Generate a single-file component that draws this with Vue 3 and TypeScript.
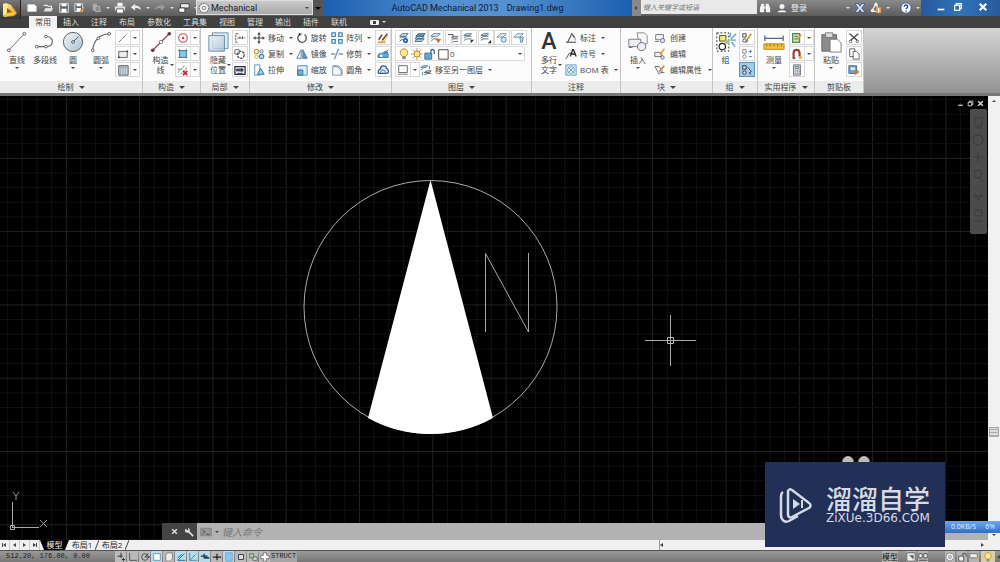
<script setup lang="ts">
import { ref } from 'vue'

interface Tool { label: string; icon: string; menu?: boolean }
interface SmallTool { icon: string; menu?: boolean; active?: boolean }

const tabs: string[] = ['常用', '插入', '注释', '布局', '参数化', '工具集', '视图', '管理', '输出', '插件', '联机']
const activeTab = ref('常用')
const layer = ref('0')
const workspace = ref('Mechanical')
const search = ref('')
const command = ref('')

const quick: { icon: string; menu?: boolean }[] = [
  { icon: 'new' }, { icon: 'open' }, { icon: 'save' }, { icon: 'saveas' }, { icon: 'copydoc', menu: true },
  { icon: 'print' }, { icon: 'undo', menu: true }, { icon: 'redo', menu: true }, { icon: 'sheets', menu: true },
]

const drawBig: Tool[] = [
  { label: '直线', icon: 'line', menu: true }, { label: '多段线', icon: 'pline' },
  { label: '圆', icon: 'circle', menu: true }, { label: '圆弧', icon: 'arc', menu: true },
]
const drawSmall: SmallTool[] = [{ icon: 's-line', menu: true }, { icon: 's-rect', menu: true }, { icon: 's-hatch', menu: true }]
const consSmall: SmallTool[] = [{ icon: 's-center', menu: true }, { icon: 's-crect', menu: true }, { icon: 's-cdel', menu: true }]
const localSmall: SmallTool[] = [{ icon: 's-break' }, { icon: 's-rot' }, { icon: 's-frame' }]
const modify: Tool[][] = [
  [{ label: '移动', icon: 'move', menu: true }, { label: '复制', icon: 'copy', menu: true }, { label: '拉伸', icon: 'stretch' }],
  [{ label: '旋转', icon: 'rotate' }, { label: '镜像', icon: 'mirror' }, { label: '缩放', icon: 'scale' }],
  [{ label: '阵列', icon: 'array', menu: true }, { label: '修剪', icon: 'trim', menu: true }, { label: '圆角', icon: 'fillet', menu: true }],
]
const modSmall: SmallTool[] = [{ icon: 's-brush' }, { icon: 's-edit' }, { icon: 's-cloud' }]
const layerTools: string[][] = [['lay-set', 'lay-iso'], ['lay-match', 'lay-prev'], ['lay-a', 'lay-b'], ['lay-c', 'lay-d']]
const notes: Tool[] = [{ label: '标注', icon: 'dim', menu: true }, { label: '符号', icon: 'symbol', menu: true }, { label: 'BOM 表', icon: 'bom', menu: true }]
const blocks: Tool[] = [{ label: '创建', icon: 'bcreate' }, { label: '编辑', icon: 'bedit' }, { label: '编辑属性', icon: 'battr', menu: true }]
const groupSmall: SmallTool[] = [{ icon: 's-gedit' }, { icon: 's-gplus' }, { icon: 's-gsel', active: true }]
const utilSmall: SmallTool[] = [{ icon: 's-select', menu: true }, { icon: 's-magnet', menu: true }, { icon: 's-calc' }]
const clipSmall: SmallTool[] = [{ icon: 's-cut' }, { icon: 's-copy' }, { icon: 's-match' }]

const toggles: { icon: string; on?: boolean }[] = [
  { icon: 't-infer' }, { icon: 't-ortho' }, { icon: 't-polar' }, { icon: 't-snap', on: true }, { icon: 't-3d' },
  { icon: 't-angle', on: true }, { icon: 't-ucs', on: true }, { icon: 't-dyn', on: true }, { icon: 't-lwt' },
  { icon: 't-trans', on: true }, { icon: 't-qp' }, { icon: 't-sel' }, { icon: 't-plus' },
]

const grid = Array.from({ length: 150 }, (_, i) => ({ p: i * 14.66, major: i % 5 === 0 }))
</script>

<template>
  <div class="app">
    <svg class="defs" aria-hidden="true">
      <defs>
        <linearGradient id="gBlue" x1="0" y1="0" x2="1" y2="1"><stop offset="0" stop-color="#f2f7fb" /><stop offset="1" stop-color="#a9bfd2" /></linearGradient>
        <linearGradient id="gGold" x1="0" y1="0" x2="1" y2="1"><stop offset="0" stop-color="#fff0a0" /><stop offset="1" stop-color="#e08a10" /></linearGradient>
      </defs>
      <symbol id="logo" viewBox="0 0 20 18"><path d="M3 3 6 2l4 2-2 9-5 2z" fill="#ffe98a" /><path d="M8 3l3 1 6 8-3 3-11 1 5-5z" fill="url(#gGold)" /><path d="M7 7v5l5-1z" fill="#8a5a08" /><path d="M5 13l10-2 1 2-12 3z" fill="#f9c93a" /></symbol>
      <symbol id="new" viewBox="0 0 14 14"><path d="M2 3h8l2 2v6H2z" fill="#fff" stroke="#ccc" /></symbol>
      <symbol id="open" viewBox="0 0 14 14"><path d="M2 4h4l1 1h4v2" fill="none" stroke="#eee" stroke-width="1.3" /><path d="M2 11 4 7h9l-2 4z" fill="#ddd" /></symbol>
      <symbol id="save" viewBox="0 0 14 14"><path d="M2 2h10v10H2z" fill="#5d6672" stroke="#eee" /><path d="M4 2h6v3H4zM4 8h6v4H4z" fill="#fff" /></symbol>
      <symbol id="saveas" viewBox="0 0 14 14"><path d="M1 2h9v9H1z" fill="#5d6672" stroke="#eee" /><path d="M3 2h5v3H3zM3 7h5v4H3z" fill="#fff" /><path d="M7 12 12 6" stroke="#d88a3a" stroke-width="2" /></symbol>
      <symbol id="copydoc" viewBox="0 0 14 14"><path d="M3 2h5v8H3z" fill="#a8a8a8" /><path d="M6 5h5l1 6H6z" fill="#8c8c8c" stroke="#bbb" /></symbol>
      <symbol id="print" viewBox="0 0 14 14"><path d="M4 1h6v4H4z" fill="#fff" /><path d="M1 5h12v5H1z" fill="#ddd" /><path d="M3 8h8v5H3z" fill="#fff" stroke="#555" /></symbol>
      <symbol id="undo" viewBox="0 0 14 14"><path d="M1 6l5-4v2.500c4 0 6 1 7 5-2-2-4-2.500-7-2.500v3z" fill="#eee" /></symbol>
      <symbol id="redo" viewBox="0 0 14 14"><path d="M13 6 8 2v2.500c-4 0-6 1-7 5 2-2 4-2.500 7-2.500v3z" fill="#9a9a9a" /></symbol>
      <symbol id="sheets" viewBox="0 0 14 14"><path d="M3 2h10v5H3z" fill="#eee" stroke="#333" /><path d="M1 7h7v5H1z" fill="#fff" stroke="#333" /></symbol>
      <symbol id="gear" viewBox="0 0 14 14"><circle cx="7" cy="7" r="5.500" fill="#eee" stroke="#777" stroke-dasharray="2 1" stroke-width="1.5" /><circle cx="7" cy="7" r="2" fill="none" stroke="#777" /></symbol>
      <symbol id="binoc" viewBox="0 0 14 14"><path d="M3 2h3v10H1V7zM8 2h3l2 5v5H8z" fill="#f2f2f2" /><path d="M6 5h2v3H6z" fill="#ddd" /></symbol>
      <symbol id="user" viewBox="0 0 14 14"><circle cx="7" cy="5" r="3.500" fill="#f2f2f2" /><path d="M1 13c0-4 12-4 12 0z" fill="#f2f2f2" /></symbol>
      <symbol id="exch" viewBox="0 0 14 14"><path d="M1 2h4l2 3 2-3h4l-4 5 4 5H9L7 9l-2 3H1l4-5z" fill="#dfe6f2" stroke="#38559a" /></symbol>
      <symbol id="a360" viewBox="0 0 14 14"><path d="M7 2 2 11h9z" fill="none" stroke="#eee" stroke-width="1.500" /><circle cx="7" cy="3" r="2" fill="#eee" /><circle cx="3" cy="10" r="2" fill="#eee" /><path d="M7 6h6v7H7z" fill="#e8944c" /><path d="M10 7v5" stroke="#fff" stroke-width="1.500" /></symbol>
      <symbol id="help" viewBox="0 0 14 14"><circle cx="7" cy="7" r="6" fill="#fff" stroke="#3c5f9c" /><path d="M5 5.500c0-3 4.500-2.500 4 0C8.800 7 7 7 7 8.500M7 10v1.500" fill="none" stroke="#24478c" stroke-width="1.6" /></symbol>

      <symbol id="line" viewBox="0 0 24 24"><path d="M3 21 20 3" stroke="#666" /><circle cx="3" cy="21" r="1.500" fill="#fff" stroke="#555" /><circle cx="20" cy="3" r="1.500" fill="#fff" stroke="#555" /></symbol>
      <symbol id="pline" viewBox="0 0 24 24"><path d="M3 17h11c8 0 8-11 0-11h-2" fill="none" stroke="#666" stroke-width="1.3" /><circle cx="3" cy="17" r="1.500" fill="#fff" stroke="#555" /><circle cx="13" cy="17" r="1.500" fill="#fff" stroke="#555" /><circle cx="13" cy="6" r="1.500" fill="#fff" stroke="#555" /></symbol>
      <symbol id="circle" viewBox="0 0 24 24"><circle cx="12" cy="12" r="10.500" fill="url(#gBlue)" stroke="#555" /><path d="m12 12 6-6" stroke="#555" /><circle cx="12" cy="12" r="1.500" fill="#fff" stroke="#555" /></symbol>
      <symbol id="arc" viewBox="0 0 24 24"><path d="M3 21C4 10 10 4 21 3" fill="none" stroke="#666" stroke-width="1.3" /><circle cx="3" cy="21" r="1.500" fill="#fff" stroke="#555" /><circle cx="9" cy="8" r="1.500" fill="#fff" stroke="#555" /><circle cx="21" cy="3" r="1.500" fill="#fff" stroke="#555" /></symbol>
      <symbol id="xline" viewBox="0 0 24 24"><path d="M3 21 21 3" stroke="#a04050" stroke-width="1.3" /><circle cx="3" cy="21" r="2" fill="#5a3a40" /><circle cx="21" cy="3" r="2" fill="#5a3a40" /><circle cx="12" cy="12" r="1.800" fill="#fff" stroke="#777" /></symbol>
      <symbol id="hide" viewBox="0 0 24 24"><path d="M6 2h17v17H6z" fill="#dcecf8" stroke="#6f8aa3" /><path d="M2 5h17v17H2z" fill="url(#gBlue)" fill-opacity=".8" stroke="#6688a6" /></symbol>
      <symbol id="insert" viewBox="0 0 24 24"><path d="M11 2h8l3 3v9h-9z" fill="#f7f7f7" stroke="#888" /><path d="M2 9h13v8H2z" fill="#eef0f4" stroke="#778" /><circle cx="16" cy="17" r="4.500" fill="#eef0f4" stroke="#667" /><path d="M2 18h4" stroke="#667" /></symbol>
      <symbol id="group" viewBox="0 0 24 24"><path d="M2 2h13v20H2z" fill="none" stroke="#222" stroke-dasharray="2 2" /><path d="M5 5h7v6H5z" fill="#f4f06a" stroke="#444" /><path d="M11 10h5v4h-5z" fill="#9bd07e" /><circle cx="8" cy="17" r="3.500" fill="#fff" stroke="#222" stroke-width="1.3" /><path d="m17 9 6-6M17 10h6M16 7l1-5M18 12l4 5" stroke="#5aa6e0" stroke-width="1.500" /></symbol>
      <symbol id="measure" viewBox="0 0 24 24"><path d="M2 5v6M22 5v6M2 8h20" stroke="#53678a" stroke-width="1.4" /><path d="M1 14h22v6H1z" fill="#f4c13c" stroke="#b98716" /><path d="M4 14v3M8 14v3M12 14v3M16 14v3M20 14v3" stroke="#9b6c0c" /></symbol>
      <symbol id="paste" viewBox="0 0 24 24"><path d="M2 4h16v18H2z" fill="#8b8b8b" stroke="#666" /><path d="M6 2h8v5H6z" fill="#ddd" stroke="#777" /><path d="M11 9h8l4 4v10H11z" fill="#fff" stroke="#777" /></symbol>

      <symbol id="s-line" viewBox="0 0 14 14"><path d="m2 12 10-10" stroke="#555" stroke-dasharray="5 1.500" /></symbol>
      <symbol id="s-rect" viewBox="0 0 14 14"><path d="M2 4h10v7H2z" fill="#eee" stroke="#555" /><path d="M1 10h2v2H1zM11 3h2v2h-2z" fill="#444" /></symbol>
      <symbol id="s-hatch" viewBox="0 0 14 14"><path d="M2 2h11v11H2z" fill="#cfd8e2" stroke="#444" /><path d="M4 3v9M6 3v9M8 3v9M10 3v9M2 4h11" stroke="#8593a3" stroke-width=".7" /></symbol>
      <symbol id="s-center" viewBox="0 0 14 14"><circle cx="7" cy="7" r="5" fill="none" stroke="#c4494f" stroke-width="1.3" /><circle cx="7" cy="7" r="1.500" fill="#c4494f" /></symbol>
      <symbol id="s-crect" viewBox="0 0 14 14"><path d="M3 3h8v8H3z" fill="#8fc3e8" stroke="#3d88bd" /><path d="M1 3h12M1 11h12M3 1v12M11 1v12" stroke="#4a6f8e" stroke-dasharray="2 1" /></symbol>
      <symbol id="s-cdel" viewBox="0 0 14 14"><path d="M1 10 9 2M4 12l8-8M1 6h5" stroke="#555" stroke-dasharray="3 1" /><path d="m7 8 5 5M12 8l-5 5" stroke="#c4272c" stroke-width="2" /></symbol>
      <symbol id="s-break" viewBox="0 0 14 14"><path d="M5 2H2v10h3M4 7h9M7 5v4M10 5v4" fill="none" stroke="#444" stroke-dasharray="3 1" /></symbol>
      <symbol id="s-rot" viewBox="0 0 14 14"><circle cx="8" cy="8" r="4" fill="none" stroke="#444" stroke-width="1.5" stroke-dasharray="3 1" /><path d="M1 2h5v5H1z" fill="none" stroke="#555" /></symbol>
      <symbol id="s-frame" viewBox="0 0 14 14"><path d="M1 3h12v9H1z" fill="#e6e8ef" stroke="#334" stroke-width="1.500" /><path d="M3 6h6V5l2 2-2 2V8H3zM4 11h6" fill="#334" stroke="#334" /></symbol>
      <symbol id="move" viewBox="0 0 14 14"><path d="M7 2v10M2 7h10" stroke="#444" stroke-width="1.3" /><path d="m7 0 2 3H5zM7 14l2-3H5zM0 7l3-2v4zM14 7l-3-2v4z" fill="#444" /></symbol>
      <symbol id="copy" viewBox="0 0 14 14"><circle cx="4" cy="4" r="2.500" fill="#fff" stroke="#d69b3a" stroke-width="1.500" /><circle cx="10" cy="4" r="2" fill="#c9e2f4" stroke="#4b8bbb" /><circle cx="4" cy="10" r="2" fill="#fff" stroke="#d69b3a" /><circle cx="10" cy="10" r="2.500" fill="#c9e2f4" stroke="#4b8bbb" stroke-width="1.500" /></symbol>
      <symbol id="stretch" viewBox="0 0 14 14"><path d="M2 1h6v12H2z" fill="#fff" stroke="#5b87ab" /><path d="M5 12 9 5l4 7z" fill="#9fcbe9" stroke="#2c6795" /></symbol>
      <symbol id="rotate" viewBox="0 0 14 14"><path d="M5 2.500a5 5 0 1 0 5 .5" fill="none" stroke="#555" stroke-width="1.500" /><path d="m3 1 4 1-3 3z" fill="#444" /></symbol>
      <symbol id="mirror" viewBox="0 0 14 14"><path d="M6 2v10H1z" fill="#fff" stroke="#456f90" /><path d="M8 2v10h5z" fill="#5da0cf" stroke="#456f90" /></symbol>
      <symbol id="scale" viewBox="0 0 14 14"><path d="M2 2h11v11H2z" fill="#d9eefb" stroke="#4682ad" /><path d="M2 7h6v6H2z" fill="#6fb2dc" stroke="#2f6c98" /></symbol>
      <symbol id="array" viewBox="0 0 14 14"><path d="M1 1h4v4H1zM9 1h4v4H9zM1 9h4v4H1zM9 9h4v4H9z" fill="#fff" stroke="#3f87b8" stroke-width="1.500" /></symbol>
      <symbol id="trim" viewBox="0 0 14 14"><path d="M0 7h5M9 7h5" stroke="#444" /><path d="M4 13 9 1" stroke="#6699c0" stroke-width="1.500" /></symbol>
      <symbol id="fillet" viewBox="0 0 14 14"><path d="M2 2h4c4 0 7 3 7 7v4H2z" fill="#f4f7fa" stroke="#7c8a99" /><path d="M3 3h3c3 0 6 3 6 6v3" fill="none" stroke="#4c81aa" /></symbol>
      <symbol id="s-brush" viewBox="0 0 14 14"><path d="m2 9 4-6M6 10l6-8" stroke="#6b4a20" stroke-width="1.800" /><path d="M1 12h9" stroke="#d69b3a" stroke-width="2" /><path d="m8 11 5-7" stroke="#e0a868" /></symbol>
      <symbol id="s-edit" viewBox="0 0 14 14"><path d="M1 11c0-5 3-6 5-4 1-4 7-4 7 0v4z" fill="#5fa9da" stroke="#33769f" /><circle cx="5" cy="9" r="1.500" fill="#fff" /><path d="m9 7 4-5" stroke="#345" /></symbol>
      <symbol id="s-cloud" viewBox="0 0 14 14"><path d="M2 11c-2-3 1-5 2-5 0-5 7-5 7-1 3 1 3 5 1 6z" fill="#dbe7f2" stroke="#3e5d7c" stroke-width="1.500" /><path d="M4 10c1-4 5-4 6 0" fill="none" stroke="#3e5d7c" /></symbol>

      <symbol id="lay-set" viewBox="0 0 14 14"><path d="M3 5l3-3h7l-3 3zM3 8l2-2h7M3 11l2-2h4" fill="#dfe9f2" stroke="#345a78" /><circle cx="10" cy="10" r="3" fill="#2c66a8" /><circle cx="10" cy="10" r="1" fill="#fff" /></symbol>
      <symbol id="lay-iso" viewBox="0 0 14 14"><path d="M1 8l3-3h8l-3 3zM1 11l3-3h8l-3 3z" fill="#b8d8e8" stroke="#375b72" /><path d="M2 5l3-3h8l-3 3z" fill="#5fa4b8" stroke="#2f5a70" /></symbol>
      <symbol id="lay-match" viewBox="0 0 14 14"><path d="M1 5l3-3h8l-3 3zM1 8l3-3M1 11l3-3h5" fill="#eef3f7" stroke="#54728a" /><path d="M6 8h7l-3 5z" fill="#cf6f31" /></symbol>
      <symbol id="lay-prev" viewBox="0 0 14 14"><path d="M5 7l2-2h6l-2 2zM5 10l2-2h6M5 13l2-2h6" fill="#eef3f7" stroke="#667" /><path d="M1 3h6v3" fill="none" stroke="#333" /></symbol>
      <symbol id="lay-a" viewBox="0 0 14 14"><path d="M1 4l3-2h6L8 4zM1 7l3-2h6M1 10l3-2h6" fill="#e4edf5" stroke="#48667f" /><path d="m13 9-4 4V9z" fill="#233" /></symbol>
      <symbol id="lay-b" viewBox="0 0 14 14"><path d="M1 4l3-2h6L8 4zM1 7l3-2h6M1 10l3-2h6" fill="#e4edf5" stroke="#48667f" /><path d="m9 13 4-4v4z" fill="#233" /></symbol>
      <symbol id="lay-c" viewBox="0 0 14 14"><path d="M1 6l4-4h7L8 6z" fill="#eef4f8" stroke="#68879c" /><circle cx="9" cy="9" r="3" fill="#cfe5f4" stroke="#4d83a8" /></symbol>
      <symbol id="lay-d" viewBox="0 0 14 14"><path d="M1 6l4-4h7L8 6z" fill="#eef4f8" stroke="#68879c" /><path d="M8 6h4l-1 6H9z" fill="#bcd8eb" stroke="#4d83a8" /></symbol>
      <symbol id="bulb" viewBox="0 0 14 14"><path d="M5 10C0 5 4 1 7 1s7 4 2 9z" fill="#ffe98f" stroke="#a58522" /><path d="M5 10h4v3H5z" fill="#888" /></symbol>
      <symbol id="sun" viewBox="0 0 14 14"><path d="M7 0v14M0 7h14M2 2l10 10M12 2 2 12" stroke="#bb8a2e" /><circle cx="7" cy="7" r="3.500" fill="#ffe48a" stroke="#a58522" /></symbol>
      <symbol id="lock" viewBox="0 0 14 14"><path d="M8 6V4c0-3 4-3 4 0v3" fill="none" stroke="#3f6f94" stroke-width="1.500" /><path d="M1 6h8v7H1z" fill="#69a8cf" stroke="#2d648c" /></symbol>
      <symbol id="sq" viewBox="0 0 14 14"><path d="M2 2h11v11H2z" fill="#fff" stroke="#333" /></symbol>
      <symbol id="tray" viewBox="0 0 14 14"><path d="M2 2h10v8H2z" fill="#fff" stroke="#555" /><path d="M1 12h12" stroke="#777" /></symbol>
      <symbol id="laymove" viewBox="0 0 14 14"><path d="M1 4l3-2h5L7 4zM1 7l3-2" fill="#bcdcf0" stroke="#41799f" /><path d="M5 10l3-2h5l-2 2zM5 13l3-2h5" fill="#bcdcf0" stroke="#555" /><path d="M11 2v4M3 9v4" stroke="#41799f" /></symbol>

      <symbol id="dim" viewBox="0 0 14 14"><path d="M1 12h12M3 12 8 2l3 5" fill="none" stroke="#444" stroke-width="1.200" /><path d="M8 2c3 2 4 5 4 8" fill="none" stroke="#777" /></symbol>
      <symbol id="symbol" viewBox="0 0 14 14"><path d="M1 13 5 6h2" fill="none" stroke="#444" /><path d="m6 10 3-8h1l3 8M7 7h5" fill="none" stroke="#222" stroke-width="1.500" /></symbol>
      <symbol id="bom" viewBox="0 0 14 14"><path d="M1 1h12v12H1z" fill="#e1effa" stroke="#5593c0" /><circle cx="7" cy="7" r="4" fill="#fff" stroke="#5593c0" /><path d="m3 3 8 8M11 3l-8 8" stroke="#5593c0" /></symbol>
      <symbol id="bcreate" viewBox="0 0 14 14"><path d="M2 3h9v6H2z" fill="#f4f4f8" stroke="#667" /><circle cx="10" cy="10" r="2.500" fill="#dde" stroke="#667" /><path d="M1 11h5" stroke="#667" /></symbol>
      <symbol id="bedit" viewBox="0 0 14 14"><path d="M1 5h8v5H1z" fill="#f4f4f8" stroke="#667" /><path d="m7 8 5-7" stroke="#e2a832" stroke-width="2" /><circle cx="10" cy="11" r="2" fill="#dde" stroke="#667" /></symbol>
      <symbol id="battr" viewBox="0 0 14 14"><path d="M1 3h5l4 5-4 4z" fill="#f4f4f8" stroke="#667" /><path d="m6 9 6-7" stroke="#c08a2a" stroke-width="2" /><path d="M8 10h4" stroke="#555" /></symbol>
      <symbol id="s-gedit" viewBox="0 0 14 14"><path d="M2 2h4v4H2z" fill="#fff" stroke="#333" /><circle cx="4" cy="10" r="2" fill="#fff" stroke="#333" /><path d="m7 9 5-7" stroke="#c99a28" stroke-width="2" /><path d="m6 12 2-3" stroke="#4b7a35" stroke-width="1.500" /></symbol>
      <symbol id="s-gplus" viewBox="0 0 14 14"><path d="M2 2h4v4H2z" fill="#fff" stroke="#777" /><circle cx="4" cy="10" r="2" fill="#fff" stroke="#777" /><path d="M9 4h4M11 2v4M9 10h4" stroke="#49769b" /></symbol>
      <symbol id="s-gsel" viewBox="0 0 14 14"><path d="M2 2h4v4H2z" fill="#d2e9f8" stroke="#223" /><circle cx="4" cy="10" r="2" fill="#d2e9f8" stroke="#223" /><path d="m8 4 4 5-2 .5 1 3" fill="#fff" stroke="#223" /></symbol>
      <symbol id="s-select" viewBox="0 0 14 14"><path d="M2 2h8v10H2z" fill="#cfe7b8" stroke="#4b8b45" stroke-width="1.500" /><path d="m7 9 5-6" stroke="#d9a437" stroke-width="2" /><path d="M4 5h4M4 8h3" stroke="#447" /></symbol>
      <symbol id="s-magnet" viewBox="0 0 14 14"><path d="M3 12V6c0-5 7-5 7 0v4" fill="none" stroke="#a33a3a" stroke-width="2.500" /><path d="M2 11h3v2H2z" fill="#555" /><circle cx="11" cy="11" r="2" fill="#e8b23a" /></symbol>
      <symbol id="s-calc" viewBox="0 0 14 14"><path d="M3 1h8v12H3z" fill="#d6dbe2" stroke="#5b6673" /><path d="M5 3h4v2H5z" fill="#fff" stroke="#667" /><path d="M5 7h5M5 9h5M5 11h5" stroke="#667" stroke-dasharray="1 1" /></symbol>
      <symbol id="s-cut" viewBox="0 0 14 14"><path d="m2 2 9 8M12 2 3 10" stroke="#444" stroke-width="1.500" /><circle cx="3" cy="11" r="1.500" fill="none" stroke="#555" /><circle cx="11" cy="11" r="1.500" fill="none" stroke="#555" /></symbol>
      <symbol id="s-copy" viewBox="0 0 14 14"><path d="M2 1h6v9H2z" fill="#fff" stroke="#555" /><path d="M6 4h4l3 3v6H6z" fill="#fff" stroke="#555" /></symbol>
      <symbol id="s-match" viewBox="0 0 14 14"><path d="M1 2h9v9H1z" fill="#6ba4cf" stroke="#3a6287" /><path d="M3 4h5v3H3z" fill="#e8f2fa" /><path d="m7 9 5-2 1 3-5 3z" fill="#d07a2e" /></symbol>

      <symbol id="t-infer" viewBox="0 0 12 12"><path d="M6 1v6M2 5h6M7 9h4M9 7v4" stroke="#333" stroke-width="1.200" /></symbol>
      <symbol id="t-ortho" viewBox="0 0 12 12"><path d="M2 1v9h9" fill="none" stroke="#444" /></symbol>
      <symbol id="t-polar" viewBox="0 0 12 12"><circle cx="6" cy="6" r="4" fill="none" stroke="#444" /><path d="M6 6h6M6 6l4-4" stroke="#333" /></symbol>
      <symbol id="t-snap" viewBox="0 0 12 12"><path d="M2 2h8v8H2z" fill="#fff" stroke="#6b8796" /></symbol>
      <symbol id="t-3d" viewBox="0 0 12 12"><path d="M2 4l2-3h6v7l-2 3H2z" fill="#eee" stroke="#777" /></symbol>
      <symbol id="t-angle" viewBox="0 0 12 12"><path d="M10 2 2 10h9M2 7l5-4" fill="none" stroke="#33708e" stroke-width="1.200" /></symbol>
      <symbol id="t-ucs" viewBox="0 0 12 12"><path d="M2 1v9h9M2 10l7-7" fill="none" stroke="#51788c" /></symbol>
      <symbol id="t-dyn" viewBox="0 0 12 12"><path d="M5 2v6M1 5h8" stroke="#234" stroke-width="1.500" /><path d="M6 6h5v2H6z" fill="#234" /></symbol>
      <symbol id="t-lwt" viewBox="0 0 12 12"><path d="M1 6h10M6 2v8" stroke="#222" stroke-width="1.500" /></symbol>
      <symbol id="t-trans" viewBox="0 0 12 12"><path d="M2 1h8v10H2z" fill="#8fc5ea" stroke="#71a6c9" /></symbol>
      <symbol id="t-qp" viewBox="0 0 12 12"><path d="M3 3h6v6H3z" fill="#ddd" stroke="#444" stroke-width="1.200" /></symbol>
      <symbol id="t-sel" viewBox="0 0 12 12"><path d="M2 2h5v5H2z" fill="none" stroke="#4a7a4a" /><path d="M6 6h5v4H6z" fill="#cfe3c7" stroke="#3e6b3e" /></symbol>
      <symbol id="t-plus" viewBox="0 0 12 12"><path d="M4 1h4v3h3v4H8v3H4V8H1V4h3z" fill="#fff" stroke="#666" /></symbol>
      <symbol id="r-qv" viewBox="0 0 12 12"><path d="M1 1h10v10H1z" fill="#eee" stroke="#555" /><path d="M4 4l5 5V4z" fill="#555" /></symbol>
      <symbol id="r-lay" viewBox="0 0 12 12"><path d="M1 2h4v5H1zM7 2h4v5H7zM1 10h10" fill="#eee" stroke="#444" /></symbol>
      <symbol id="r-lock" viewBox="0 0 12 12"><path d="M7 5V3c0-2 4-2 4 0v2" fill="none" stroke="#555" stroke-width="1.300" /><path d="M2 5h6v6H2z" fill="#eee" stroke="#444" /></symbol>
      <symbol id="r-anno" viewBox="0 0 12 12"><path d="M1 2h9v5H1z" fill="#eee" stroke="#666" /><path d="M6 6h5v4z" fill="#d9a437" /></symbol>
      <symbol id="winmin" viewBox="0 0 12 12"><path d="M2 8h8v2H2z" fill="currentColor" /></symbol>
      <symbol id="winres" viewBox="0 0 12 12"><path d="M4 4V2h6v6H8M2 4h6v6H2z" fill="none" stroke="currentColor" stroke-width="1.500" /></symbol>
      <symbol id="winx" viewBox="0 0 12 12"><path d="m2 2 8 8M10 2l-8 8" stroke="currentColor" stroke-width="2.500" /></symbol>
      <symbol id="wrench" viewBox="0 0 12 12"><path d="m5 5 6 6" stroke="#ddd" stroke-width="2" /><path d="M1 4a3 3 0 0 0 6 0 3 3 0 0 0-2-3v3H4L2 2z" fill="#ddd" /></symbol>
      <symbol id="prompt" viewBox="0 0 16 12"><path d="M1 1h14v10H1z" fill="#999" stroke="#777" /><path d="m3 3 4 3-4 3M8 9h5" fill="none" stroke="#555" stroke-width="1.300" /></symbol>
    </svg>

    <header class="titlebar">
      <button class="appbtn" aria-label="应用程序菜单"><svg><use href="#logo" /></svg></button>
      <nav class="quick">
        <template v-for="q in quick" :key="q.icon">
          <button :aria-label="q.icon"><svg class="i12"><use :href="'#' + q.icon" /></svg></button>
          <i v-if="q.menu" class="tri pale" />
        </template>
      </nav>
      <div class="workspace">
        <svg class="i12"><use href="#gear" /></svg>
        <select v-model="workspace" aria-label="工作空间"><option>Mechanical</option></select>
        <i class="tri" />
      </div>
      <button class="wsmore" aria-label="自定义"><i class="tri" /></button>
      <h1><span>AutoCAD Mechanical 2013</span><span>Drawing1.dwg</span></h1>
      <button class="expand" aria-label="展开"><i class="play" /></button>
      <input v-model="search" class="search" aria-label="搜索" placeholder="键入关键字或短语">
      <div class="info">
        <button aria-label="搜索帮助"><svg class="i12"><use href="#binoc" /></svg></button>
        <button class="login"><svg class="i10"><use href="#user" /></svg>登录</button>
      </div>
      <div class="info right">
        <i class="tri pale" />
        <button aria-label="Exchange"><svg class="i12"><use href="#exch" /></svg></button>
        <button aria-label="A360"><svg class="i12"><use href="#a360" /></svg></button>
        <i class="tri pale" />
        <button class="helpbtn" aria-label="帮助"><svg class="i12"><use href="#help" /></svg></button>
        <i class="tri pale" />
      </div>
      <div class="winbtns">
        <button aria-label="最小化"><svg class="i10"><use href="#winmin" /></svg></button>
        <button aria-label="还原"><svg class="i10"><use href="#winres" /></svg></button>
        <button class="close" aria-label="关闭"><svg class="i10"><use href="#winx" /></svg></button>
      </div>
    </header>

    <nav class="tabs">
      <button v-for="t in tabs" :key="t" :class="{ active: t === activeTab }" @click="activeTab = t">{{ t }}</button>
      <button class="cam" aria-label="最小化功能区"><b /><i class="tri pale" /></button>
    </nav>

    <main class="ribbon">
      <section class="panel p-draw">
        <div class="body">
          <button v-for="b in drawBig" :key="b.label" class="big"><svg><use :href="'#' + b.icon" /></svg><span>{{ b.label }}</span><i v-if="b.menu" class="tri" /></button>
          <div class="smalls"><button v-for="s in drawSmall" :key="s.icon" class="small" :aria-label="s.icon"><svg class="i12"><use :href="'#' + s.icon" /></svg><em v-if="s.menu"><i class="tri" /></em></button></div>
        </div>
        <h2>绘制<i class="tri wide" /></h2>
      </section>

      <section class="panel p-cons">
        <div class="body">
          <button class="big"><svg><use href="#xline" /></svg><span>构造<br>线</span><i class="tri side" /></button>
          <div class="smalls"><button v-for="s in consSmall" :key="s.icon" class="small" :aria-label="s.icon"><svg class="i12"><use :href="'#' + s.icon" /></svg><em v-if="s.menu"><i class="tri" /></em></button></div>
        </div>
        <h2>构造<i class="tri wide" /></h2>
      </section>

      <section class="panel p-local">
        <div class="body">
          <button class="big"><svg><use href="#hide" /></svg><span>隐藏<br>位置</span><i class="tri side" /></button>
          <div class="smalls"><button v-for="s in localSmall" :key="s.icon" class="small" :aria-label="s.icon"><svg class="i12"><use :href="'#' + s.icon" /></svg></button></div>
        </div>
        <h2>局部<i class="tri wide" /></h2>
      </section>

      <section class="panel p-mod">
        <div class="body">
          <div v-for="(col, i) in modify" :key="i" class="col">
            <button v-for="m in col" :key="m.label" class="row"><svg class="i12"><use :href="'#' + m.icon" /></svg>{{ m.label }}<i v-if="m.menu" class="tri" /></button>
          </div>
          <div class="smalls"><button v-for="s in modSmall" :key="s.icon" class="small" :aria-label="s.icon"><svg class="i12"><use :href="'#' + s.icon" /></svg></button></div>
        </div>
        <h2>修改<i class="tri wide" /></h2>
      </section>

      <section class="panel p-layer">
        <div class="body stack">
          <div class="ltools"><div v-for="(g, i) in layerTools" :key="i"><button v-for="l in g" :key="l" class="small" :aria-label="l"><svg class="i12"><use :href="'#' + l" /></svg></button></div></div>
          <div class="combo">
            <svg class="i12"><use href="#bulb" /></svg><svg class="i12"><use href="#sun" /></svg><svg class="i12"><use href="#lock" /></svg><svg class="i12"><use href="#sq" /></svg>
            <select v-model="layer" aria-label="图层"><option>0</option></select><i class="tri" />
          </div>
          <div class="lrow">
            <button class="small" aria-label="图层状态"><svg class="i12"><use href="#tray" /></svg><em><i class="tri" /></em></button>
            <button class="row"><svg class="i12"><use href="#laymove" /></svg>移至另一图层<i class="tri" /></button>
          </div>
        </div>
        <h2>图层<i class="tri wide" /></h2>
      </section>

      <section class="panel p-note">
        <div class="body">
          <button class="big"><b class="letter">A</b><span>多行<br>文字</span><i class="tri side" /></button>
          <div class="col"><button v-for="m in notes" :key="m.label" class="row"><svg class="i12"><use :href="'#' + m.icon" /></svg>{{ m.label }}<i class="tri" /></button></div>
        </div>
        <h2>注释</h2>
      </section>

      <section class="panel p-block">
        <div class="body">
          <button class="big"><svg><use href="#insert" /></svg><span>插入</span><i class="tri" /></button>
          <div class="col"><button v-for="m in blocks" :key="m.label" class="row"><svg class="i12"><use :href="'#' + m.icon" /></svg>{{ m.label }}<i v-if="m.menu" class="tri" /></button></div>
        </div>
        <h2>块<i class="tri wide" /></h2>
      </section>

      <section class="panel p-group">
        <div class="body">
          <button class="big"><svg><use href="#group" /></svg><span>组</span></button>
          <div class="smalls"><button v-for="s in groupSmall" :key="s.icon" class="small" :class="{ on: s.active }" :aria-label="s.icon"><svg class="i12"><use :href="'#' + s.icon" /></svg></button></div>
        </div>
        <h2>组<i class="tri wide" /></h2>
      </section>

      <section class="panel p-util">
        <div class="body">
          <button class="big"><svg><use href="#measure" /></svg><span>测量</span><i class="tri" /></button>
          <div class="smalls"><button v-for="s in utilSmall" :key="s.icon" class="small" :aria-label="s.icon"><svg class="i12"><use :href="'#' + s.icon" /></svg><em v-if="s.menu"><i class="tri" /></em></button></div>
        </div>
        <h2>实用程序<i class="tri wide" /></h2>
      </section>

      <section class="panel p-clip">
        <div class="body">
          <button class="big"><svg><use href="#paste" /></svg><span>粘贴</span><i class="tri" /></button>
          <div class="smalls"><button v-for="s in clipSmall" :key="s.icon" class="small" :aria-label="s.icon"><svg class="i12"><use :href="'#' + s.icon" /></svg></button></div>
        </div>
        <h2>剪贴板</h2>
      </section>
    </main>

    <div class="work">
      <div class="canvas">
        <svg class="drawing">
          <g transform="translate(-7 -11)">
            <line v-for="(g, i) in grid" :key="'v' + i" :x1="g.p" :x2="g.p" y1="0" y2="110%" class="g" :class="{ major: g.major }" />
            <line v-for="(g, i) in grid" :key="'h' + i" x1="0" x2="110%" :y1="g.p" :y2="g.p" class="g" :class="{ major: g.major }" />
          </g>
          <circle cx="430.5" cy="211" r="126.500" fill="none" stroke="#bbb" stroke-width=".9" />
          <path d="M430.500 84 493 322Q464 338 430.500 338T368 322z" fill="#fff" />
          <path d="M485.500 236V157.500L528.500 236V157" fill="none" stroke="#bbb" stroke-width=".9" />
          <path d="M645 244.500h51M670.500 219v51" stroke="#aaa" />
          <path d="M667.500 241.500h6v6h-6z" fill="none" stroke="#bbb" />
          <path d="M12.500 406v26M10.500 429.500h4v4h-4zM12 431.500h27" fill="none" stroke="#aaa" />
          <path d="m13 396 3 4 3-4M16 400v4M40 424l7 7M47 424l-7 7" fill="none" stroke="#999" />
        </svg>
        <div class="docbtns">
          <button aria-label="最小化图形"><svg><use href="#winmin" /></svg></button>
          <button aria-label="还原图形"><svg><use href="#winres" /></svg></button>
          <button aria-label="关闭图形"><svg><use href="#winx" /></svg></button>
        </div>
        <div class="navbar">
          <svg viewBox="0 0 17 125"><g fill="none" stroke="#3a3a3a"><path d="M5 9h7v8H5zM6 19h6" /><circle cx="8" cy="31" r="5" /><path d="M8 43v10M4 48h9" /><circle cx="8" cy="65" r="4" /><path d="m10 69 4 4" /><path d="M4 87h9M5 84l3 7 4-7" /><path d="M5 101h7v6H5zM4 112h9" /></g></svg>
        </div>
        <div class="cmd">
          <div class="cmdgrip"><svg class="i10"><use href="#winx" /></svg><svg class="i10"><use href="#wrench" /></svg></div>
          <svg class="prompt"><use href="#prompt" /></svg><i class="tri" />
          <input v-model="command" aria-label="命令" placeholder="键入命令">
        </div>
      </div>
      <div class="vscroll"><i class="tri up" /><b /><i class="tri" /></div>
      <div class="bumps"><i /><i /></div>
      <a class="brand" href="#">
        <svg viewBox="0 0 36 38"><path d="M9 5v24c0 2 2 3 4 2l17-9c2-1 2-4 0-5L13 4c-2-1-3-1-4 1z" fill="none" stroke="#d6dae4" stroke-width="2.500" /><path d="M4 6c-2 1-2 3-2 5v18c0 5 4 8 8 6l9-5" fill="none" stroke="#d6dae4" stroke-width="2.500" /><path d="m14 13 7 5-7 5z" fill="#d6dae4" /><path d="M23 14v8" stroke="#d6dae4" stroke-width="2" /></svg>
        <span><strong>溜溜自学</strong><small>ZiXUe.3D66.COM</small></span>
      </a>
      <div class="speed"><span>0.0KB/S</span><span>6%</span></div>
    </div>

    <div class="sheets">
      <div class="arrows"><button aria-label="第一个"><i class="play back bar" /></button><button aria-label="上一个"><i class="play back" /></button><button aria-label="下一个"><i class="play" /></button><button aria-label="最后一个"><i class="play bar" /></button></div>
      <button class="sheet cur">模型</button><button class="sheet">布局1</button><svg class="slash" viewBox="0 0 4 10"><path d="M0 10 4 0" stroke="#444" /></svg><button class="sheet">布局2</button><svg class="slash" viewBox="0 0 4 10"><path d="M0 10 4 0" stroke="#444" /></svg>
      <div class="hscroll"><i class="play back" /><i class="play" /></div>
    </div>

    <footer class="status">
      <output>512.20, 176.00, 0.00</output>
      <div class="toggles"><button v-for="t in toggles" :key="t.icon" :class="{ on: t.on }" :aria-label="t.icon"><svg><use :href="'#' + t.icon" /></svg></button></div>
      <button class="struct">STRUCT</button>
      <div class="sright">
        <button class="model">模型</button>
        <button aria-label="快速查看布局"><svg><use href="#r-qv" /></svg></button>
        <button aria-label="快速查看图形"><svg><use href="#r-lay" /></svg></button>
        <button class="gap" aria-label="工作空间"><svg><use href="#gear" /></svg></button>
        <button aria-label="锁定"><svg><use href="#r-lock" /></svg></button>
        <button aria-label="注释"><svg><use href="#r-anno" /></svg></button>
        <button class="iso" aria-label="隔离"><svg><use href="#bulb" /></svg></button>
        <i class="play back" />
      </div>
    </footer>
  </div>
</template>

<style>
html, body { margin: 0; background: #000; }
</style>

<style scoped>
.app { display: flex; flex-direction: column; height: 100vh; min-width: 0; overflow: hidden; font-family: "Open Sans", "Noto Sans CJK SC", sans-serif; font-size: 8px; line-height: 10px; color: #444; background: #3f3f3f; }
.app *, .app *::before { box-sizing: border-box; }
.defs { position: absolute; width: 0; height: 0; }
button { padding: 0; border: 0; background: none; font: inherit; color: inherit; display: flex; align-items: center; justify-content: center; }
select, input { font: inherit; color: inherit; border: 0; background: none; padding: 0; margin: 0; min-width: 0; outline: 0; appearance: none; }
svg { display: block; flex: none; }
.i12 { width: 12px; height: 12px; }
.i10 { width: 10px; height: 10px; }
.tri { width: 0; height: 0; border: 2px solid transparent; border-top-color: #444; border-bottom: 0; flex: none; }
.tri.wide { border-width: 3px; border-bottom: 0; }
.tri.pale { border-top-color: #ddd; }
.tri.up { border-top: 0; border-bottom: 2px solid #444; }
.play { width: 0; height: 0; border: 2px solid transparent; border-left: 3px solid #444; border-right: 0; flex: none; }
.play.back { border-left: 0; border-right: 3px solid #444; }

.titlebar { flex: none; display: flex; height: 16px; background: linear-gradient(#8a8a8a, #5c5c5c); }
.appbtn { width: 21px; height: 19px; background: linear-gradient(#777, #333); border-right: 1px solid #222; position: relative; }
.appbtn svg { width: 20px; height: 18px; }
.quick { display: flex; align-items: center; gap: 4px; width: 175px; padding-left: 5px; }
.workspace { display: flex; align-items: center; gap: 1px; width: 117px; height: 15px; padding: 0 3px 0 1px; background: linear-gradient(#c9c9c9, #aaa); border: 1px solid #ddd; color: #222; font: 9px/12px Roboto, sans-serif; }
.workspace select { flex: 1; }
.wsmore { width: 10px; background: #555; }
.wsmore .tri { border-width: 3px; border-bottom: 0; border-top-color: #000; }
h1 { flex: 1; margin: 0; display: flex; justify-content: center; align-items: center; gap: 8px; font: 400 9px/12px Roboto, sans-serif; color: #0c1c38; background: linear-gradient(90deg, #1b5fb0, #5590d0 40%, #5590d0 60%, #1b5fb0); }
.expand { width: 9px; background: #888; }
.search { width: 116px; height: 14px; padding-left: 2px; font-size: 7px; font-style: italic; background: #e9e9e9; }
.search::placeholder, .cmd input::placeholder { color: #777; opacity: 1; }
.info { display: flex; align-items: center; gap: 6px; padding-left: 2px; width: 87px; color: #eee; }
.login { gap: 4px; }
.info.right { gap: 4px; width: 77px; padding-left: 2px; }
.helpbtn { margin-left: 6px; }
.winbtns { display: flex; gap: 7px; width: 79px; padding: 0 0 2px 15px; background: linear-gradient(90deg, #27599c, #2f73b9 50%, #27599c); color: #fff; }
.winbtns .close { margin-left: 8px; }

.tabs { flex: none; display: flex; height: 12px; padding-left: 29px; color: #ddd; background: #404040; }
.tabs button { padding: 0 6px; }
.tabs .active { color: #444; background: #f2f2f2; }
.tabs .cam { margin-left: 11px; gap: 3px; }
.cam b { width: 9px; height: 5px; border: 1px solid #eee; border-width: 1px 3px; border-radius: 1px; }

.ribbon { flex: none; display: flex; height: 65px; background: linear-gradient(#d4d4d4, #929292); }
.panel { flex: none; display: flex; flex-direction: column; background: #fcfcfc; border-right: 1px solid #c4c4c4; }
.body { flex: 1; display: flex; align-items: flex-start; padding: 2px 0 0 3px; }
.panel h2 { margin: 0; height: 12px; display: flex; align-items: center; justify-content: center; gap: 5px; font-size: 8px; font-weight: 400; background: #ececec; }
.p-draw { width: 143px; }
.p-cons { width: 58px; }
.p-local { width: 49px; }
.p-mod { width: 142px; }
.p-layer { width: 140px; }
.p-note { width: 89px; }
.p-block { width: 92px; }
.p-group { width: 45px; }
.p-util { width: 57px; }
.p-clip { width: 49px; }
.big { position: relative; flex-direction: column; justify-content: flex-start; width: 28px; padding-top: 1px; line-height: 10px; white-space: nowrap; }
.big svg { width: 22px; height: 22px; }
.big > span { margin-top: 2px; }
.big > .tri { margin-top: 2px; }
.big > .side { position: absolute; right: 1px; bottom: 9px; }
.letter { height: 22px; font: 500 23px/22px Roboto, sans-serif; color: #333; }
.smalls { display: flex; flex-direction: column; gap: 1px; }
.small { height: 15px; border: 1px solid #d8d8d8; background: #fff; justify-content: flex-start; padding: 0 1px; }
.small em { display: flex; align-items: center; height: 13px; padding: 0 1px 0 2px; margin-left: 1px; border-left: 1px solid #ddd; }
.small.on { background: #9fcdec; border-color: #5b94bd; }
.row { height: 16px; gap: 3px; white-space: nowrap; }
.row .tri { margin-left: 2px; }
.col { display: flex; flex-direction: column; align-items: flex-start; }
.p-cons .big { width: 29px; }
.p-mod .col { width: 43px; }
.p-mod .col:nth-child(2) { width: 36px; }
.p-mod .smalls { margin-left: 1px; }
.stack { flex-direction: column; align-items: stretch; padding-right: 6px; }
.ltools { display: flex; justify-content: space-between; height: 16px; }
.ltools > div { display: flex; gap: 1px; }
.combo { display: flex; align-items: center; gap: 1px; height: 15px; margin-bottom: 1px; padding: 0 2px; border: 1px solid #ddd; background: #fff; }
.combo select { flex: 1; }
.lrow { display: flex; }
.p-note .col { margin-left: 2px; }
.p-block .col { margin-left: 2px; }
.p-block .row { gap: 4px; }
.p-group .body { padding-left: 0; gap: 1px; padding-right: 1px; }
.p-group .big { width: 25px; }
.p-util .body { padding-left: 2px; }
.p-util .smalls { align-items: flex-start; margin-left: 1px; }
.p-clip .body { padding-left: 2px; }
.p-clip .smalls { margin-left: 1px; }

.work { position: relative; flex: 1; min-height: 0; display: flex; border-top: 3px solid #777; background: #000; }
.canvas { position: relative; flex: 1; min-width: 0; overflow: hidden; background: #000; }
.drawing { position: absolute; inset: 0; width: 100%; height: 100%; }
.g { stroke: #111; }
.g.major { stroke: #222; }
.docbtns { position: absolute; top: 4px; right: 4px; display: flex; gap: 3px; color: #ddd; }
.docbtns svg { width: 7px; height: 7px; }
.navbar { position: absolute; top: 13px; right: 1px; width: 17px; background: #4b4b4b; border-radius: 2px; }
.cmd { position: absolute; left: 162px; right: 0; bottom: 0; height: 17px; display: flex; align-items: center; gap: 3px; background: #b2b2b2; font-size: 10px; }
.cmdgrip { display: flex; align-items: center; justify-content: flex-end; gap: 6px; width: 35px; height: 17px; padding-right: 3px; background: #444; color: #ddd; }
.cmdgrip .i10:first-child { width: 7px; height: 7px; }
.prompt { width: 12px; height: 10px; }
.cmd input { flex: 1; font-style: italic; }
.vscroll { display: flex; flex-direction: column; align-items: center; width: 12px; padding: 4px 0 4px; background: #f1f1f1; }
.vscroll b { width: 10px; height: 10px; margin: auto 0 97px; border: 1px solid #aaa; background: repeating-linear-gradient(#ddd 0 1px, #aaa 1px 2px, #ddd 2px 3px); }
.bumps { position: absolute; left: 842px; bottom: 70px; display: flex; gap: 4px; }
.bumps i { width: 12px; height: 14px; border-radius: 50%; background: #bbb; }
.brand { position: absolute; right: 55px; bottom: -7px; z-index: 2; display: flex; align-items: center; gap: 11px; width: 180px; height: 85px; padding-left: 14px; background: #222f57; color: #d6dae4; text-decoration: none; }
.brand svg { width: 36px; height: 38px; }
.brand span { display: flex; flex-direction: column; gap: 1px; }
.brand strong { font: 500 26px/26px "Noto Sans CJK SC", sans-serif; }
.brand small { font: 12px/13px "DejaVu Sans", sans-serif; }
.speed { position: absolute; right: 0; bottom: 7px; display: flex; justify-content: space-between; width: 55px; height: 12px; padding: 0 5px 0 6px; align-items: center; font-size: 7px; color: #e8f3ff; background: linear-gradient(#6aa9ee, #2c6fc9); }

.sheets { flex: none; display: flex; height: 10px; background: #f0f0f0; color: #222; }
.arrows { display: flex; width: 40px; }
.arrows button { flex: 1; border-right: 1px solid #ccc; }
.arrows .play.bar { box-shadow: 1px 0 0 #444; }
.arrows .play.back.bar { box-shadow: -1px 0 0 #444; }
.sheet { width: 26px; }
.cur { width: 29px; background: #000; color: #eee; clip-path: polygon(0 0, 100% 0, 86% 100%, 14% 100%); }
.slash { width: 4px; height: 10px; }
.hscroll { flex: 1; display: flex; align-items: center; justify-content: space-between; margin-left: 530px; padding: 0 16px 0 0; border-left: 1px solid #999; }

.status { flex: none; display: flex; align-items: flex-start; height: 12px; overflow: hidden; background: linear-gradient(#999, #777); border-top: 1px solid #555; color: #222; }
.status output { width: 115px; padding-left: 6px; font: 7px/11px "Liberation Mono", monospace; white-space: nowrap; }
.toggles { display: flex; gap: 1px; }
.toggles button { width: 11px; height: 11px; background: #bbb; }
.toggles .on { background: #b5dcec; }
.status svg { width: 10px; height: 10px; }
.struct { height: 11px; padding: 0 1px; background: #a5a5a5; font: 7px/11px "Liberation Mono", monospace; }
.sright { flex: 1; display: flex; justify-content: flex-end; align-items: center; height: 11px; gap: 2px; }
.sright button { height: 11px; background: #b4b4b4; }
.sright .model { margin-right: 6px; color: #111; }
.sright .gap { margin-left: 15px; }
.sright .iso { width: 14px; background: #d8cfa8; }
</style>
